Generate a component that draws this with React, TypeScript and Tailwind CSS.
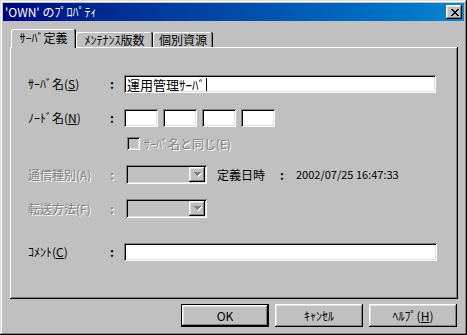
import type { ReactNode } from 'react';

// classic 3D bevels, drawn with inset shadows so they take no layout space
const RAISED = 'shadow-[inset_-1px_-1px_0_#000,inset_1px_1px_0_#fff,inset_-2px_-2px_0_#808080,inset_2px_2px_0_#dfdfdf]';
const SUNKEN = 'shadow-[inset_1px_1px_0_#808080,inset_-1px_-1px_0_#fff,inset_2px_2px_0_#000,inset_-2px_-2px_0_#dfdfdf]';
const FRAME = 'shadow-[inset_-1px_-1px_0_#000,inset_1px_1px_0_#dfdfdf,inset_-2px_-2px_0_#808080,inset_2px_2px_0_#fff]';
const PANEL = 'shadow-[inset_-1px_-1px_0_#000,inset_1px_1px_0_#fff,inset_-2px_-2px_0_#808080]';
const TAB = 'shadow-[inset_-1px_0_0_#000,inset_1px_1px_0_#fff,inset_-2px_0_0_#808080]';
const DISABLED = 'text-[#808080] [text-shadow:1px_1px_0_#fff]';

function CloseGlyph() {
  const px: Array<[number, number, number]> = [
    [0, 0, 2], [6, 0, 2],
    [1, 1, 2], [5, 1, 2],
    [2, 2, 4],
    [3, 3, 2],
    [2, 4, 4],
    [1, 5, 2], [5, 5, 2],
    [0, 6, 2], [6, 6, 2],
  ];
  return (
    <svg width="8" height="7" viewBox="0 0 8 7" shapeRendering="crispEdges">
      {px.map(([x, y, w], i) => <rect key={i} x={x} y={y} width={w} height={1} fill="#000" />)}
    </svg>
  );
}

function Arrow() {
  const rows: Array<[number, number]> = [[0, 7], [1, 5], [2, 3], [3, 1]];
  return (
    <svg width="8" height="5" viewBox="0 0 8 5" shapeRendering="crispEdges">
      {rows.map(([y, w]) => <rect key={`s${y}`} x={(7 - w) / 2 + 1} y={y + 1} width={w} height={1} fill="#fff" />)}
      {rows.map(([y, w]) => <rect key={y} x={(7 - w) / 2} y={y} width={w} height={1} fill="#808080" />)}
    </svg>
  );
}

function Combo() {
  return (
    <div className={`ml-[2px] flex h-[19px] w-[81px] justify-end bg-[#c0c0c0] p-[2px] ${SUNKEN}`}>
      <div className={`flex h-full w-[16px] items-center justify-center pl-[1px] ${RAISED}`}>
        <Arrow />
      </div>
    </div>
  );
}

function Row({ label, disabled, className, children }: { label: ReactNode; disabled?: boolean; className?: string; children: ReactNode }) {
  return (
    <div className={`flex items-center ${className ?? ''}`}>
      <span className={`w-[82px] ${disabled ? DISABLED : ''}`}>{label}</span>
      <span className={`w-[14px] font-bold ${disabled ? DISABLED : ''}`}>:</span>
      {children}
    </div>
  );
}

function Button({ children, isDefault }: { children: ReactNode; isDefault?: boolean }) {
  return (
    <div className={`h-[23px] w-[88px] ${isDefault ? 'border border-black' : ''}`}>
      <div className={`flex h-full w-full items-center justify-center ${RAISED}`}>{children}</div>
    </div>
  );
}

export default function App() {
  return (
    <div className={`h-[335px] w-[467px] bg-[#c0c0c0] p-[3px] text-[12px] leading-none text-black font-['Noto_Sans_CJK_JP',sans-serif] ${FRAME}`}>
      <div className="flex h-[18px] items-center justify-between bg-linear-to-r from-[#000080] to-[#1084d0] pl-[2px] pr-[2px]">
        <span className="text-white">'OWN' のﾌﾟﾛﾊﾟﾃｨ</span>
        <div className={`flex h-[14px] w-[16px] items-center justify-center bg-[#c0c0c0] pl-[1px] ${RAISED}`}>
          <CloseGlyph />
        </div>
      </div>

      <div className="ml-[7px] mt-[8px] w-[448px]">
        <div className="flex h-[18px] items-start pl-[1px]">
          <div className={`relative z-10 flex h-[19px] w-[65px] items-center justify-center rounded-t-[2px] bg-[#c0c0c0] pb-[1px] ${TAB}`}>
            ｻｰﾊﾞ定義
          </div>
          <div className={`mt-[3px] flex h-[15px] w-[77px] items-center justify-center rounded-t-[2px] ${TAB}`}>
            ﾒﾝﾃﾅﾝｽ版数
          </div>
          <div className={`mt-[3px] flex h-[15px] w-[60px] items-center justify-center rounded-t-[2px] ${TAB}`}>
            個別資源
          </div>
        </div>

        <div className={`flex h-[252px] flex-col pl-[18px] pt-[28px] ${PANEL}`}>
          <Row label={<>ｻｰﾊﾞ名(<span className="underline">S</span>)</>}>
            <div className={`flex h-[18px] w-[312px] items-center bg-white pl-[3px] text-[13px] ${SUNKEN}`}>
              運用管理ｻｰﾊﾞ<span className="ml-[1px] h-[13px] w-[1px] bg-black" />
            </div>
          </Row>

          <Row label={<>ﾉｰﾄﾞ名(<span className="underline">N</span>)</>} className="mt-[16px]">
            <div className="flex gap-[5px]">
              {[0, 1, 2, 3].map(i => (
                <div key={i} className={`h-[18px] w-[34px] bg-white ${SUNKEN}`} />
              ))}
            </div>
          </Row>

          <div className="ml-[99px] mt-[10px] flex items-center">
            <div className={`h-[13px] w-[13px] bg-[#c0c0c0] ${SUNKEN}`} />
            <span className={`ml-[4px] ${DISABLED}`}>ｻｰﾊﾞ名と同じ(E)</span>
          </div>

          <Row label="通信種別(A)" disabled className="mt-[15px]">
            <Combo />
            <span className="ml-[10px] w-[63px]">定義日時</span>
            <span className="w-[16px] font-bold">:</span>
            <span className="text-[11px]">2002/07/25 16:47:33</span>
          </Row>

          <Row label="転送方法(F)" disabled className="mt-[15px]">
            <Combo />
          </Row>

          <Row label={<>ｺﾒﾝﾄ(<span className="underline">C</span>)</>} className="mt-[25px]">
            <div className={`h-[18px] w-[313px] bg-white ${SUNKEN}`} />
          </Row>
        </div>
      </div>

      <div className="mt-[5px] flex justify-end gap-[6px] pr-[7px]">
        <Button isDefault>OK</Button>
        <Button>ｷｬﾝｾﾙ</Button>
        <Button>ﾍﾙﾌﾟ(<span className="underline">H</span>)</Button>
      </div>
    </div>
  );
}
